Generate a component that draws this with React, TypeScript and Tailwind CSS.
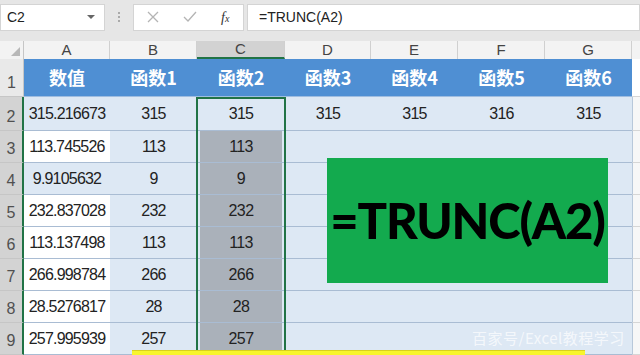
import React from "react";

const cols = ["A", "B", "C", "D", "E", "F", "G"];
const widths = ["w-[86px]", "w-[87px]", "w-[88px]", "w-[86px]", "w-[87px]", "w-[87px]", "w-[87px]"];
const heads = ["数值", "函数1", "函数2", "函数3", "函数4", "函数5", "函数6"];

const values = [
  ["315.216673", "315", "315", "315", "315", "316", "315"],
  ["113.745526", "113", "113"],
  ["9.9105632", "9", "9"],
  ["232.837028", "232", "232"],
  ["113.137498", "113", "113"],
  ["266.998784", "266", "266"],
  ["28.5276817", "28", "28"],
  ["257.995939", "257", "257"],
];

const sans = { fontFamily: '"Liberation Sans", Arial, sans-serif' };
const cjk = { fontFamily: '"Noto Sans CJK SC", "Noto Sans", sans-serif' };

function RowHead({ n, h, active }: { n: number; h: string; active?: boolean }) {
  return (
    <div
      className={`w-[24px] ${h} shrink-0 flex items-end justify-center pb-[1px] text-[16px] text-[#505050] border-b border-[#c6c6c6] ${
        active ? "bg-[#d3d3d3] border-r-2 border-r-[#217346]" : "bg-[#e9e9e9] border-r border-r-[#c6c6c6]"
      }`}
      style={sans}
    >
      {n}
    </div>
  );
}

export default function App() {
  return (
    <div className="w-[640px] h-[355px] overflow-hidden bg-[#e6e6e6] relative" style={sans}>
      {/* formula bar */}
      <div className="h-[33px] flex items-center pt-[1px]">
        <div className="w-[105px] h-[27px] bg-white border border-[#d4d4d4] flex items-center justify-between pl-[6px] pr-[9px] text-[14px] text-[#222]">
          <span>C2</span>
          <span className="w-0 h-0 border-l-[4px] border-r-[4px] border-t-[4px] border-l-transparent border-r-transparent border-t-[#666]" />
        </div>
        <div className="w-[28px] flex flex-col items-center gap-[2px]">
          <span className="w-[2px] h-[2px] bg-[#aaa]" />
          <span className="w-[2px] h-[2px] bg-[#aaa]" />
          <span className="w-[2px] h-[2px] bg-[#aaa]" />
        </div>
        <div className="w-[111px] h-[27px] bg-white border border-[#d4d4d4] flex items-center">
          <svg width="12" height="12" viewBox="0 0 12 12" className="ml-[13px]">
            <path d="M1 1 L11 11 M11 1 L1 11" stroke="#b4b4b4" strokeWidth="1.3" />
          </svg>
          <svg width="14" height="12" viewBox="0 0 14 12" className="ml-[24px]">
            <path d="M1 6 L5 10 L13 1" stroke="#b4b4b4" strokeWidth="1.3" fill="none" />
          </svg>
          <span
            className="ml-[24px] italic text-[14px] text-[#333]"
            style={{ fontFamily: '"Liberation Serif", serif' }}
          >
            f<span className="text-[10px]">x</span>
          </span>
        </div>
        <div className="ml-[3px] flex-1 h-[27px] bg-white border border-[#d4d4d4] flex items-center pl-[11px] text-[14px] text-[#222]">
          =TRUNC(A2)
        </div>
      </div>

      {/* column headers */}
      <div className="mt-[8px] h-[18px] flex bg-[#f3f3f3]">
        <div className="w-[24px] shrink-0 relative border-r border-[#c6c6c6]">
          <span
            className="absolute right-[3px] bottom-[3px] w-0 h-0"
            style={{ borderBottom: "9px solid #b8b8b8", borderLeft: "9px solid transparent" }}
          />
        </div>
        {cols.map((c, i) => (
          <div
            key={c}
            className={`${widths[i]} shrink-0 flex items-center justify-center text-[15px] text-[#444] border-r border-[#d0d0d0] ${
              c === "C" ? "bg-[#d2d2d2] border-b-2 border-b-[#217346]" : ""
            }`}
          >
            {c}
          </div>
        ))}
        <div className="flex-1" />
      </div>

      {/* row 1 */}
      <div className="flex h-[38px]">
        <RowHead n={1} h="h-[38px]" />
        <div className="flex bg-[#4f8fd3] border-b border-[#9fbde0]">
          {heads.map((t, i) => (
            <div
              key={t}
              className={`${widths[i]} shrink-0 flex items-center justify-center text-white font-bold text-[18px]`}
              style={cjk}
            >
              {t}
            </div>
          ))}
        </div>
        <div className="flex-1 bg-white border-b border-[#d6d6d6]" />
      </div>

      {/* data rows */}
      {values.map((row, r) => {
        const h = r === 0 ? "h-[34px]" : "h-[32px]";
        return (
          <div key={r} className={`flex ${h}`}>
            <RowHead n={r + 2} h={h} active />
            <div className="flex bg-[#dde8f4] border-b border-[#a9bcd3]">
              {cols.map((c, i) => {
                const v = row[i] ?? "";
                let bg = "";
                if (i === 0 && r > 0 && r !== 2) bg = "bg-white";
                const shaded = i === 2 && r > 0;
                return (
                  <div
                    key={c}
                    className={`${widths[i]} shrink-0 flex items-center justify-center ${bg} ${shaded ? "px-[3px]" : ""}`}
                  >
                    {shaded ? (
                      <div className="w-full h-full bg-[#aab1ba] flex items-center justify-center text-[16px] text-[#222] tracking-[-0.6px]">
                        {v}
                      </div>
                    ) : (
                      <span className="text-[16px] text-[#222] tracking-[-0.8px]">{v}</span>
                    )}
                  </div>
                );
              })}
            </div>
            <div className="flex-1 bg-[#f7f7f7] border-b border-[#d6d6d6] border-l border-l-[#b8c8da]" />
          </div>
        );
      })}

      {/* selection border on column C */}
      <div className="absolute left-[196px] top-[97px] w-[90px] h-[270px] border-2 border-[#217346]" />

      {/* formula callout */}
      <div className="absolute left-[327px] top-[158px] w-[281px] h-[125px] bg-[#13aa4e] flex items-center justify-center">
        <span
          className="text-black font-black text-[49px] tracking-[-1.2px] leading-none"
          style={{ fontFamily: "Lato, \"Open Sans\", sans-serif" }}
        >
          =TRUNC(A2)
        </span>
      </div>

      {/* yellow strip */}
      <div className="absolute left-[132px] top-[350px] w-[453px] h-[10px] bg-[#f8f52c] border-t border-[#d8d020]" />

      {/* watermark */}
      <div
        className="absolute left-[472px] top-[327px] text-[15px] text-white/70 tracking-[0.5px]"
        style={cjk}
      >
        百家号/Excel教程学习
      </div>
    </div>
  );
}
